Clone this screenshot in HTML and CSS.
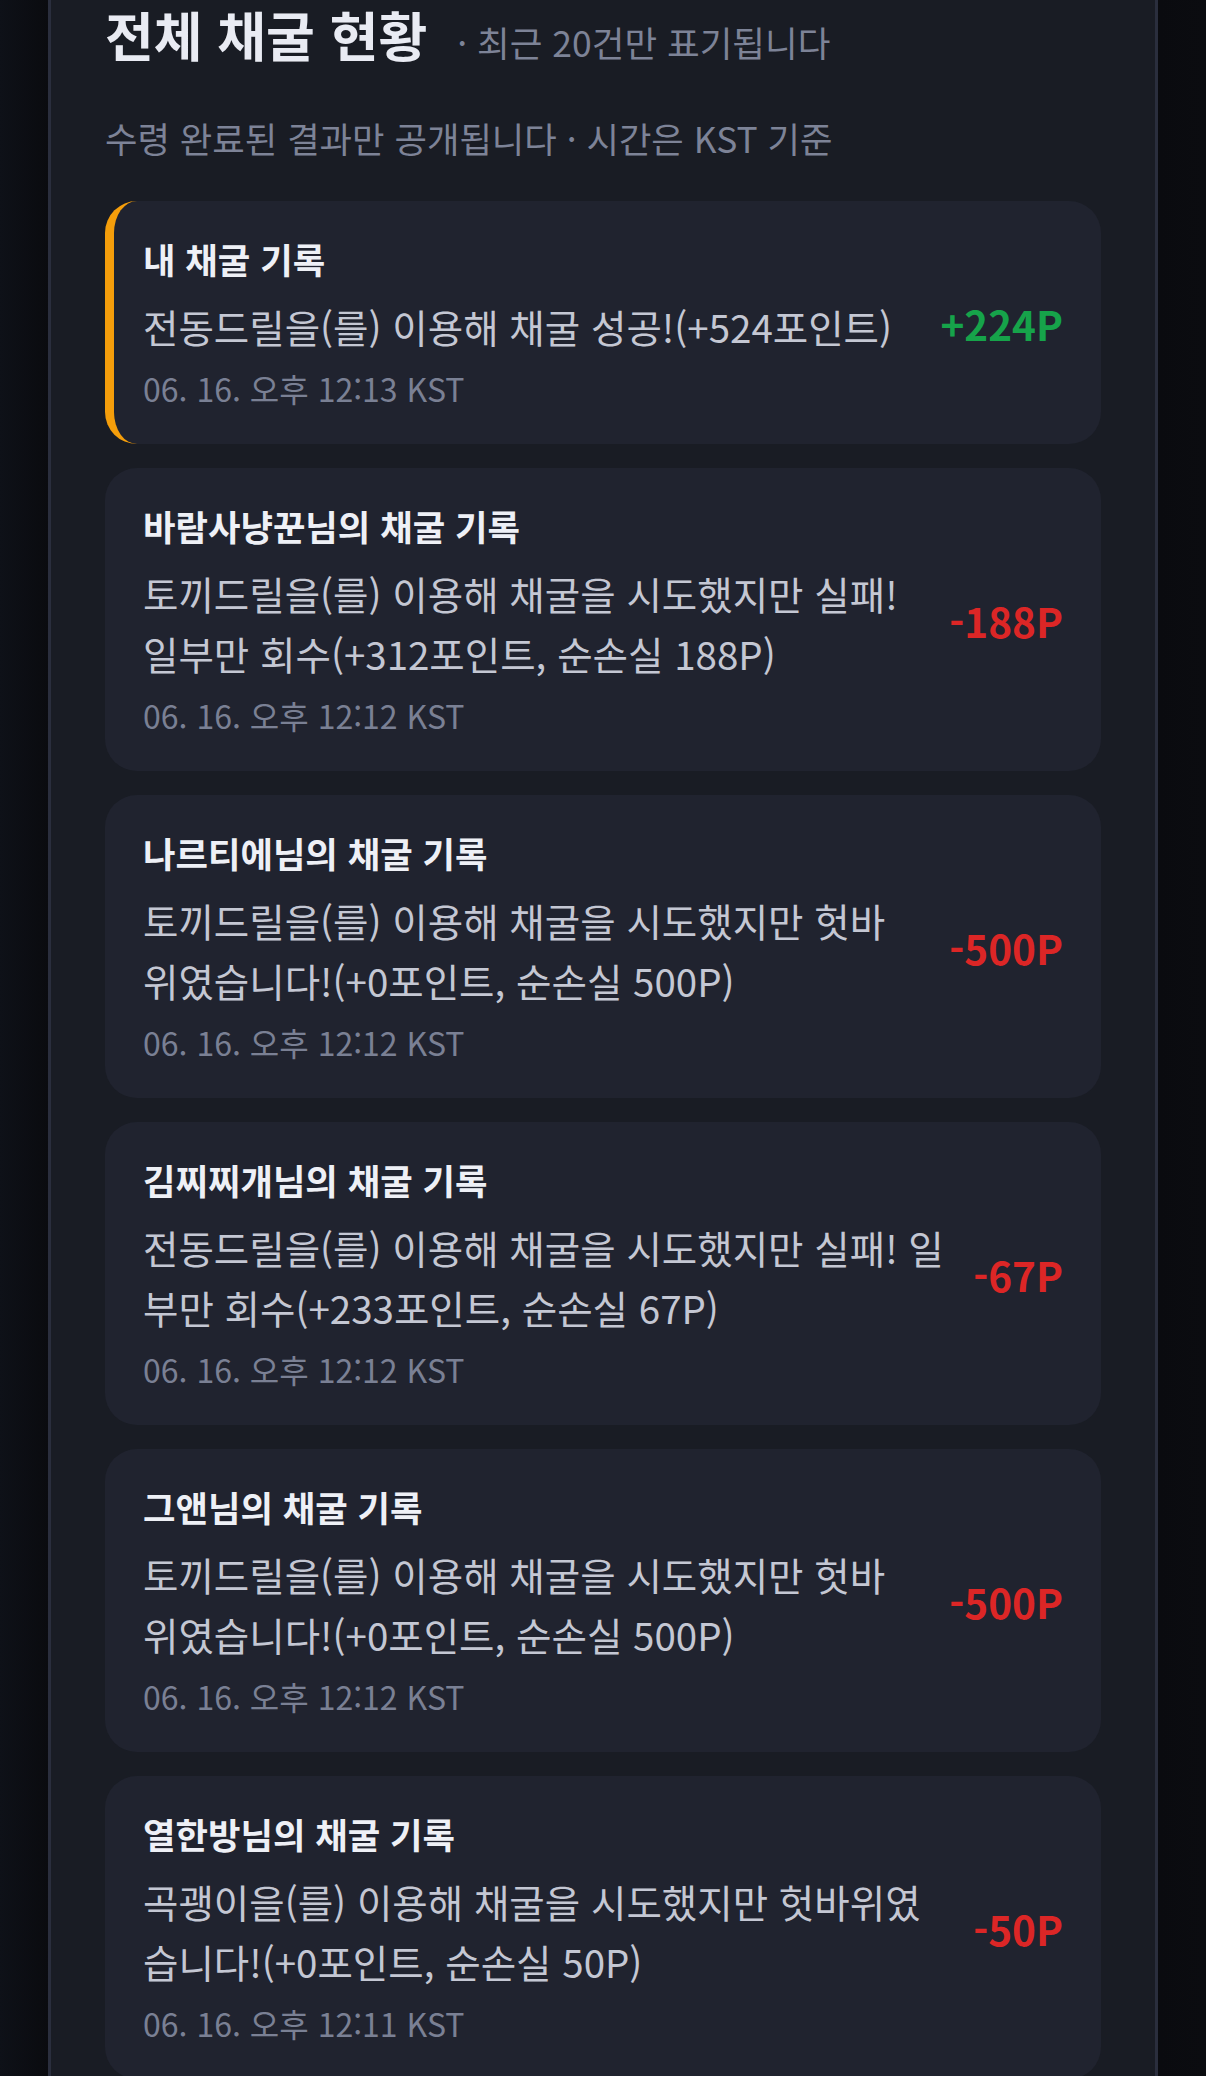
FILE: index.html
```html
<!DOCTYPE html>
<html lang="ko">
<head>
<meta charset="utf-8">
<title>전체 채굴 현황</title>
<link rel="stylesheet" href="styles.css">
</head>
<body>
<div class="page">
  <section class="panel">
    <div class="head">
      <h2 class="title">전체 채굴 현황</h2>
      <span class="sub">· 최근 20건만 표기됩니다</span>
    </div>
    <p class="note">수령 완료된 결과만 공개됩니다 · 시간은 KST 기준</p>
    <ul class="list">
      <li class="card mine">
        <div class="info">
          <div class="who">내 채굴 기록</div>
          <div class="msg">전동드릴을(를) 이용해 채굴 성공!(+524포인트)</div>
          <div class="time">06. 16. 오후 12:13 KST</div>
        </div>
        <div class="amt plus">+224P</div>
      </li>
      <li class="card">
        <div class="info">
          <div class="who">바람사냥꾼님의 채굴 기록</div>
          <div class="msg">토끼드릴을(를) 이용해 채굴을 시도했지만 실패! 일부만 회수(+312포인트, 순손실 188P)</div>
          <div class="time">06. 16. 오후 12:12 KST</div>
        </div>
        <div class="amt minus">-188P</div>
      </li>
      <li class="card">
        <div class="info">
          <div class="who">나르티에님의 채굴 기록</div>
          <div class="msg">토끼드릴을(를) 이용해 채굴을 시도했지만 헛바위였습니다!(+0포인트, 순손실 500P)</div>
          <div class="time">06. 16. 오후 12:12 KST</div>
        </div>
        <div class="amt minus">-500P</div>
      </li>
      <li class="card">
        <div class="info">
          <div class="who">김찌찌개님의 채굴 기록</div>
          <div class="msg">전동드릴을(를) 이용해 채굴을 시도했지만 실패! 일부만 회수(+233포인트, 순손실 67P)</div>
          <div class="time">06. 16. 오후 12:12 KST</div>
        </div>
        <div class="amt minus">-67P</div>
      </li>
      <li class="card">
        <div class="info">
          <div class="who">그앤님의 채굴 기록</div>
          <div class="msg">토끼드릴을(를) 이용해 채굴을 시도했지만 헛바위였습니다!(+0포인트, 순손실 500P)</div>
          <div class="time">06. 16. 오후 12:12 KST</div>
        </div>
        <div class="amt minus">-500P</div>
      </li>
      <li class="card">
        <div class="info">
          <div class="who">열한방님의 채굴 기록</div>
          <div class="msg">곡괭이을(를) 이용해 채굴을 시도했지만 헛바위였습니다!(+0포인트, 순손실 50P)</div>
          <div class="time">06. 16. 오후 12:11 KST</div>
        </div>
        <div class="amt minus">-50P</div>
      </li>
    </ul>
  </section>
</div>
</body>
</html>
```

FILE: styles.css
```css
html, body {
  margin: 0;
  padding: 0;
  height: 2076px;
  overflow: hidden;
}
body {
  background: linear-gradient(90deg, #0e1118 0%, #0a0b0f 4%, #0a0b0f 96%, #0b0c10 100%);
  font-family: "Noto Sans CJK KR", "Noto Sans", sans-serif;
  color: #e9ebf3;
}
.page {
  padding: 0 48px;
}
.panel {
  background: #191c24;
  border-left: 3px solid #2a2e3d;
  border-right: 3px solid #2a2e3d;
  padding: 2px 54px 40px;
  min-height: 2100px;
  box-sizing: border-box;
}
.head {
  display: flex;
  align-items: baseline;
}
.title {
  margin: 0;
  font-size: 53px;
  line-height: 64px;
  font-weight: 700;
  color: #e9ebf3;
}
.sub {
  margin-left: 30px;
  font-size: 35.5px;
  color: #7d8397;
}
.note {
  margin: 46px 0 38px;
  font-size: 35.3px;
  line-height: 50px;
  color: #7d8397;
}
.list {
  list-style: none;
  margin: 0;
  padding: 0;
  display: flex;
  flex-direction: column;
  gap: 24px;
}
.card {
  display: flex;
  align-items: center;
  gap: 29px;
  background: #20232f;
  border-radius: 32px;
  border-left: 9px solid transparent;
  padding: 36px 38px 34px 29px;
}
.card.mine {
  border-left-color: #f59e0b;
}
.info {
  flex: 1;
  min-width: 0;
}
.who {
  font-size: 35.3px;
  line-height: 43px;
  font-weight: 700;
  color: #eef0f6;
}
.msg {
  margin-top: 16px;
  font-size: 38.5px;
  line-height: 60px;
  color: #c4c7d3;
}
.time {
  margin-top: 11px;
  font-size: 32px;
  line-height: 43px;
  color: #7a8094;
}
.amt {
  flex-shrink: 0;
  white-space: nowrap;
  font-size: 40.5px;
  font-weight: 700;
}
.amt.plus {
  color: #16a34a;
}
.amt.minus {
  color: #dc2626;
}
```
